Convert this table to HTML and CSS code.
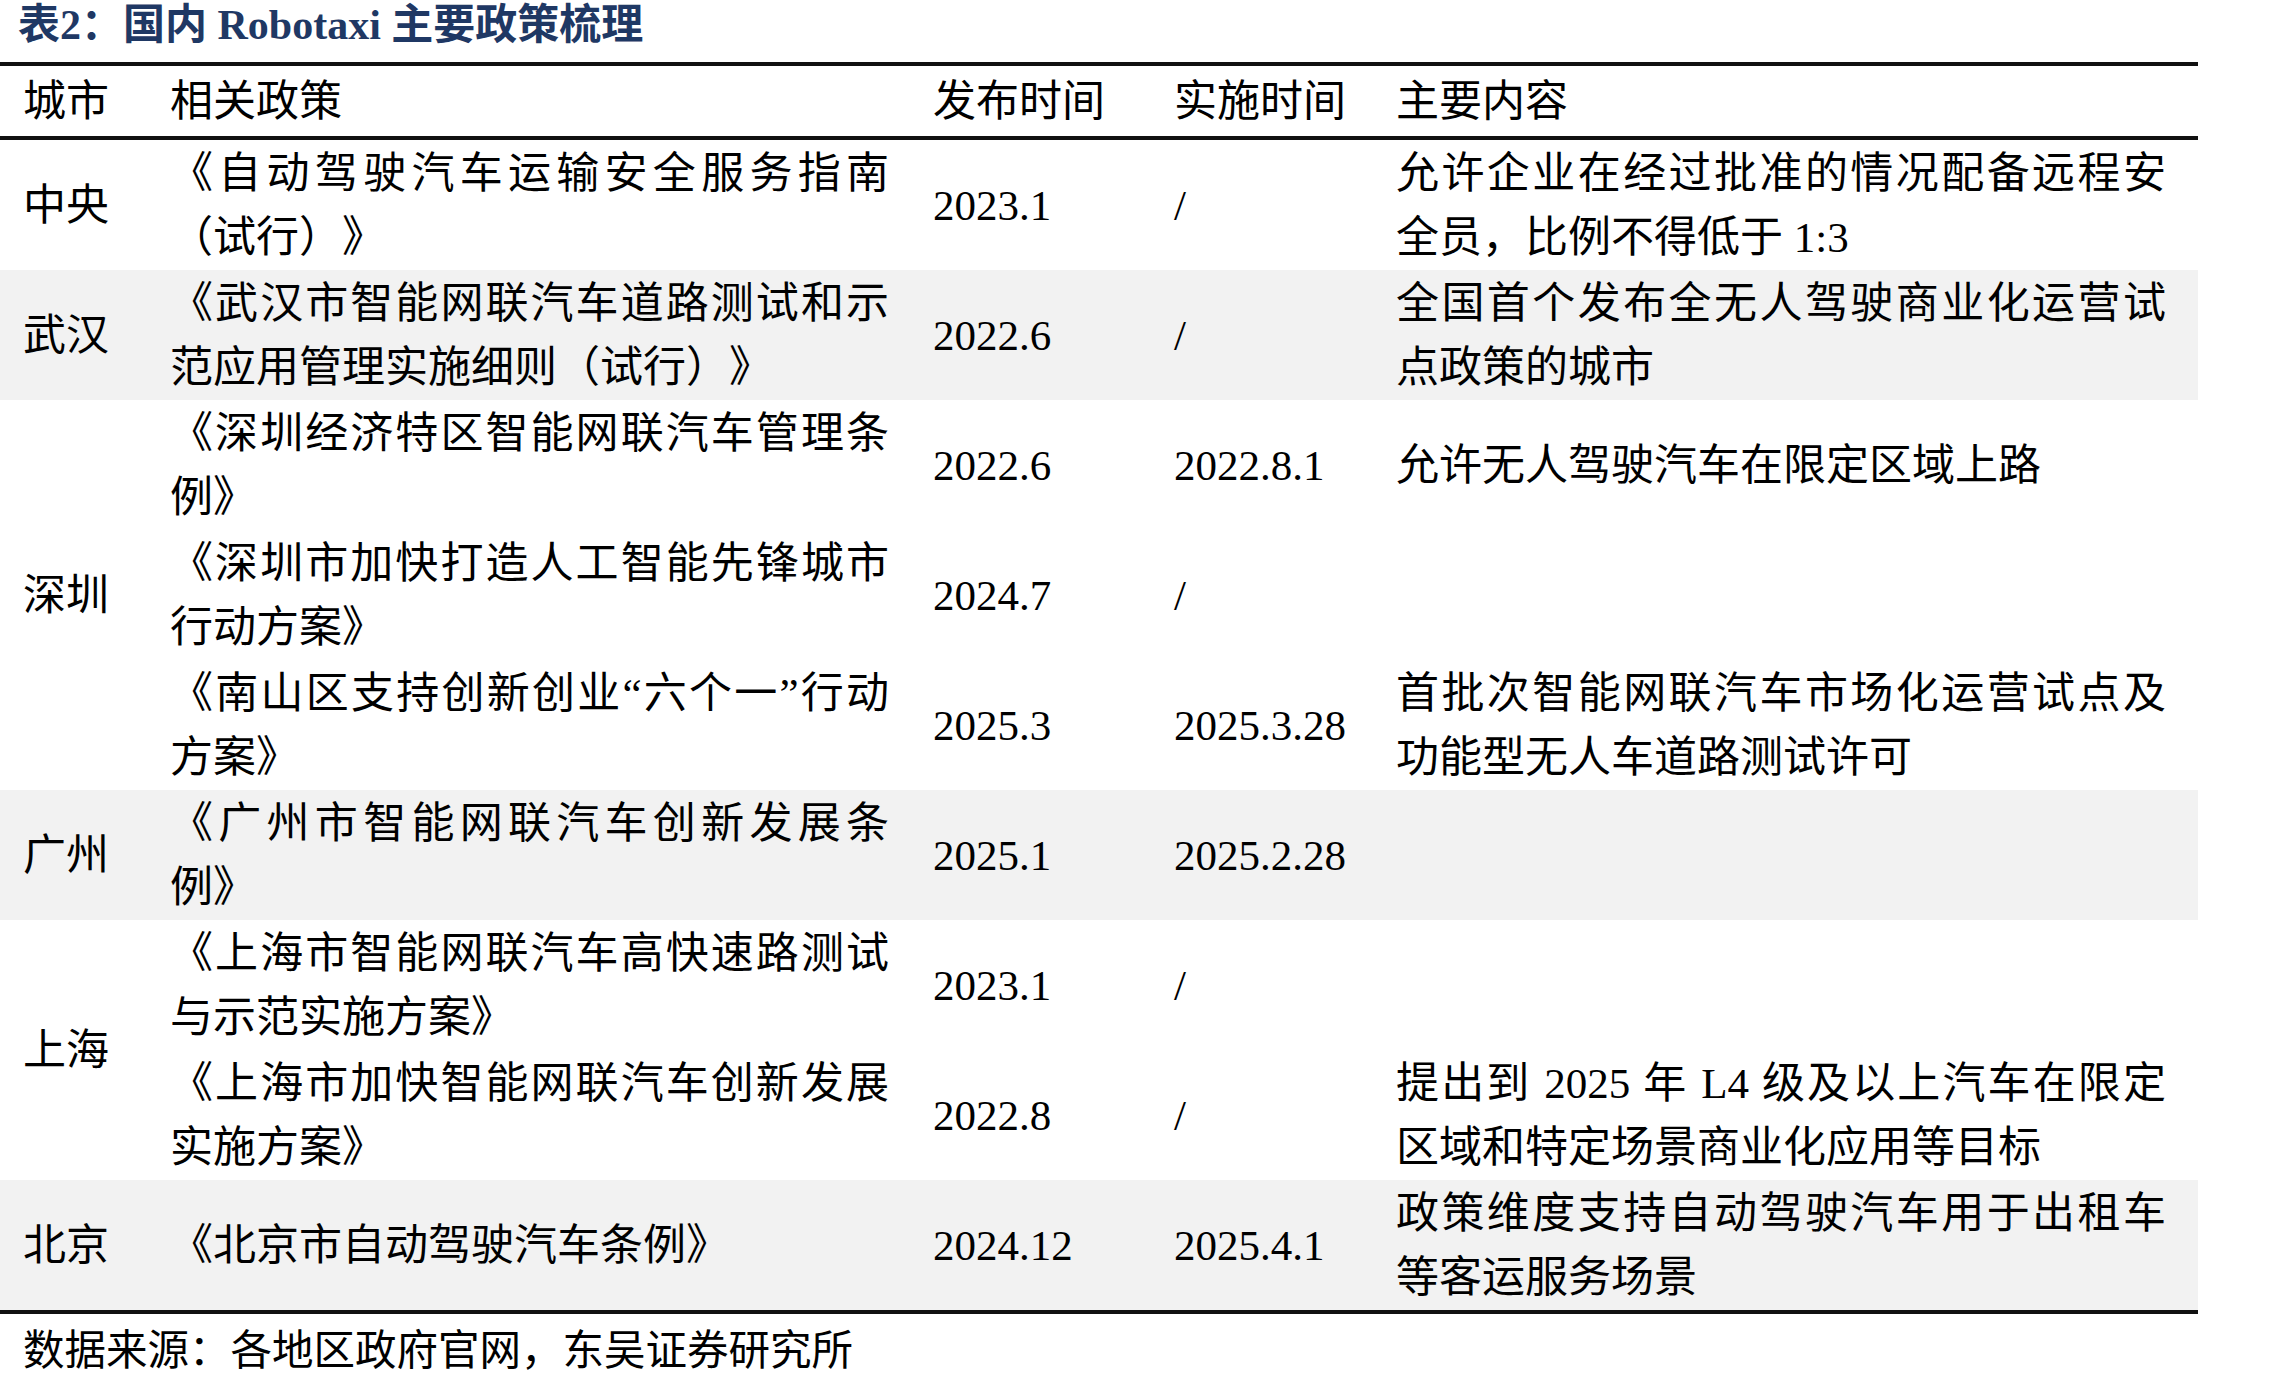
FILE: index.html
```html
<!DOCTYPE html>
<html lang="zh-CN">
<head>
<meta charset="utf-8">
<title>国内 Robotaxi 主要政策梳理</title>
<link rel="stylesheet" href="styles.css">
</head>
<body>
<div class="page">
  <h1 class="title">表2：国内 Robotaxi 主要政策梳理</h1>
  <table class="policy-table">
    <colgroup>
      <col class="c-city">
      <col class="c-policy">
      <col class="c-pub">
      <col class="c-impl">
      <col class="c-content">
    </colgroup>
    <thead>
      <tr>
        <th>城市</th>
        <th>相关政策</th>
        <th>发布时间</th>
        <th>实施时间</th>
        <th class="content">主要内容</th>
      </tr>
    </thead>
    <tbody>
      <tr>
        <td class="city">中央</td>
        <td class="policy">《自动驾驶汽车运输安全服务指南（试行）》</td>
        <td>2023.1</td>
        <td>/</td>
        <td class="content">允许企业在经过批准的情况配备远程安全员，比例不得低于 1:3</td>
      </tr>
      <tr class="shade">
        <td class="city">武汉</td>
        <td class="policy">《武汉市智能网联汽车道路测试和示范应用管理实施细则（试行）》</td>
        <td>2022.6</td>
        <td>/</td>
        <td class="content">全国首个发布全无人驾驶商业化运营试点政策的城市</td>
      </tr>
      <tr>
        <td class="city" rowspan="3">深圳</td>
        <td class="policy">《深圳经济特区智能网联汽车管理条例》</td>
        <td>2022.6</td>
        <td>2022.8.1</td>
        <td class="content">允许无人驾驶汽车在限定区域上路</td>
      </tr>
      <tr>
        <td class="policy">《深圳市加快打造人工智能先锋城市行动方案》</td>
        <td>2024.7</td>
        <td>/</td>
        <td class="content"></td>
      </tr>
      <tr>
        <td class="policy">《南山区支持创新创业“六个一”行动方案》</td>
        <td>2025.3</td>
        <td>2025.3.28</td>
        <td class="content">首批次智能网联汽车市场化运营试点及功能型无人车道路测试许可</td>
      </tr>
      <tr class="shade">
        <td class="city">广州</td>
        <td class="policy">《广州市智能网联汽车创新发展条例》</td>
        <td>2025.1</td>
        <td>2025.2.28</td>
        <td class="content"></td>
      </tr>
      <tr>
        <td class="city" rowspan="2">上海</td>
        <td class="policy">《上海市智能网联汽车高快速路测试与示范实施方案》</td>
        <td>2023.1</td>
        <td>/</td>
        <td class="content"></td>
      </tr>
      <tr>
        <td class="policy">《上海市加快智能网联汽车创新发展实施方案》</td>
        <td>2022.8</td>
        <td>/</td>
        <td class="content">提出到 2025 年 L4 级及以上汽车在限定区域和特定场景商业化应用等目标</td>
      </tr>
      <tr class="shade last">
        <td class="city">北京</td>
        <td class="policy">《北京市自动驾驶汽车条例》</td>
        <td>2024.12</td>
        <td>2025.4.1</td>
        <td class="content">政策维度支持自动驾驶汽车用于出租车等客运服务场景</td>
      </tr>
    </tbody>
  </table>
  <p class="source">数据来源：各地区政府官网，东吴证券研究所</p>
</div>
</body>
</html>
```

FILE: styles.css
```css
html, body {
  margin: 0;
  padding: 0;
  background: #ffffff;
}

body {
  font-family: "Liberation Serif", "Noto Sans CJK SC", serif;
  color: #000000;
  text-spacing-trim: space-all;
}

.page {
  width: 2280px;
}

.title {
  margin: 0 0 14px 0;
  padding: 2px 0 0 18px;
  font-size: 42px;
  line-height: 46px;
  font-weight: 700;
  color: #1f3864;
  font-family: "Liberation Serif", "Noto Sans CJK SC", serif;
  text-spacing-trim: space-all;
}

.policy-table {
  width: 2198px;
  table-layout: fixed;
  border-collapse: separate;
  border-spacing: 0;
  font-size: 43px;
  line-height: 64px;
  text-spacing-trim: space-all;
}

.c-city { width: 148px; }
.c-policy { width: 763px; }
.c-pub { width: 241px; }
.c-impl { width: 220px; }
.c-content { width: 826px; }

.policy-table th {
  font-weight: 400;
  text-align: left;
  height: 68px;
  padding: 2px 22px 0 22px;
  box-sizing: content-box;
  border-top: 4px solid #111111;
  border-bottom: 4px solid #111111;
  vertical-align: middle;
}

.policy-table td {
  height: 130px;
  padding: 2px 22px 0 22px;
  box-sizing: border-box;
  vertical-align: middle;
  text-align: left;
}

.policy-table th:first-child,
.policy-table td.city {
  padding-left: 23px;
  padding-right: 0;
}

.policy-table td.policy {
  text-align: justify;
}

.policy-table td.content,
.policy-table th.content {
  padding-left: 24px;
  padding-right: 32px;
}

.policy-table td.content {
  text-align: justify;
}

.policy-table tr.shade td {
  background: #f2f2f2;
}

.policy-table tr.last td {
  border-bottom: 4px solid #111111;
}

.source {
  margin: 12px 0 0 0;
  padding-left: 23px;
  font-size: 41.5px;
  line-height: 50px;
}
```
